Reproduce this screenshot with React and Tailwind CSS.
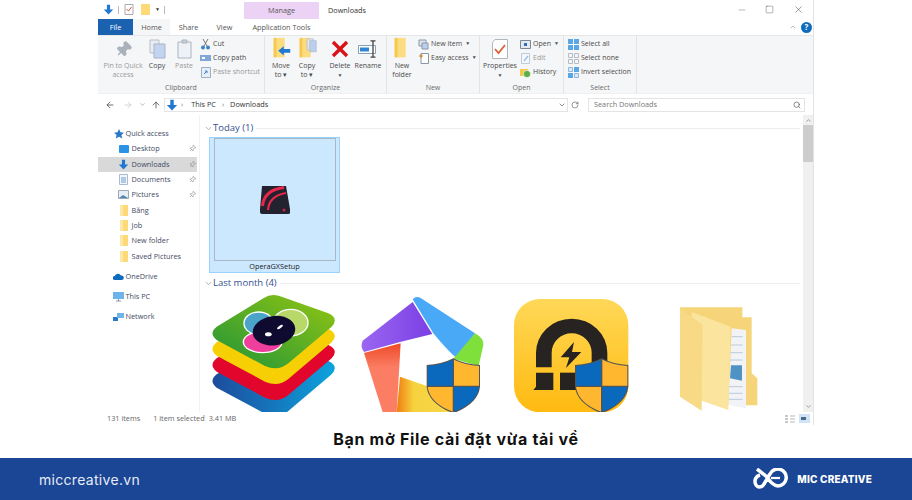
import React from "react";
import {
  ArrowLeft,
  ArrowRight,
  ArrowUp,
  ChevronDown,
  ChevronUp,
  Minus,
  Pin,
  RotateCw,
  Search,
  Square,
  X,
} from "lucide-react";

function DownArrow({ size = 14 }) {
  return (
    <svg width={size} height={size} viewBox="0 0 14 14">
      <path d="M5 1h4v6h4l-6 6.5L1 7h4z" fill="#1f78d1" />
    </svg>
  );
}

function SmallFolder() {
  return (
    <svg width="10" height="13" viewBox="0 0 10 13">
      <path d="M1 1h8v11H1z" fill="#fdd978" />
      <path d="M1 1h3v11H1z" fill="#fbe7a8" />
    </svg>
  );
}

function BigFolder({ children }) {
  return (
    <svg width="22" height="24" viewBox="0 0 22 26">
      <path d="M3 1h12v21H3z" fill="#fcdc7e" />
      <path d="M3 1h3v21H3z" fill="#f5c94f" />
      {children}
    </svg>
  );
}

function RibbonLarge({ icon, label, className, dim }) {
  return (
    <div className={`flex flex-col items-center shrink-0 ${className}`}>
      <div className="h-[24px] flex items-center justify-center">{icon}</div>
      <div
        className={`text-center leading-[9px] whitespace-nowrap ${dim ? "text-[#9a9a9a]" : "text-[#4a4a4a]"}`}
      >
        {label}
      </div>
    </div>
  );
}

function RibbonSmall({ icon, label, dim, caret }) {
  return (
    <div
      className={`h-[14px] flex items-center gap-[2px] whitespace-nowrap ${dim ? "text-[#9a9a9a]" : "text-[#4a4a4a]"}`}
    >
      <span className="w-[11px] h-[11px] flex items-center justify-center shrink-0">{icon}</span>
      <span>{label}</span>
      {caret && <span className="text-[5px] ml-[1px]">▼</span>}
    </div>
  );
}

function RibbonGroup({ title, className, children }) {
  return (
    <div className={`flex flex-col h-full border-r border-[#e2e3e4] shrink-0 ${className}`}>
      <div className="h-[47px] pt-[1px] flex">{children}</div>
      <div className="flex-1 text-center text-[#6a6a6a] leading-[9px]">{title}</div>
    </div>
  );
}

function Shield({ x, y, s = 1 }) {
  return (
    <g transform={`translate(${x} ${y}) scale(${s})`}>
      <path d="M0 20 Q45 18 80 0 Q115 18 160 20 V85 Q155 135 80 165 Q5 135 0 85 Z" fill="#555" />
      <path d="M3 23 Q45 20 78 4 V82 H3 Z" fill="#0a68bd" />
      <path d="M82 4 Q115 20 157 23 V82 H82 Z" fill="#ffb730" />
      <path d="M3 86 H78 V160 Q10 135 3 86 Z" fill="#ffb730" />
      <path d="M82 86 H157 Q150 135 82 160 Z" fill="#0a68bd" />
    </g>
  );
}

function BlueStacksIcon() {
  const layer =
    "M190 55 Q215 38 245 50 L385 100 Q418 115 395 140 L265 250 Q235 275 195 258 L50 180 Q25 160 50 140 Z";
  return (
    <svg width="148" height="118" viewBox="0 42 444 354">
      <defs>
        <linearGradient id="bsGreen" x1="0" x2="1" y1="1" y2="0">
          <stop offset="0" stopColor="#1f9439" />
          <stop offset="1" stopColor="#93c512" />
        </linearGradient>
        <linearGradient id="bsBlue" x1="0" x2="1" y1="0" y2="0">
          <stop offset="0" stopColor="#1d4b9c" />
          <stop offset="1" stopColor="#0da3dd" />
        </linearGradient>
      </defs>
      <path d={layer} transform="translate(0 143)" fill="url(#bsBlue)" />
      <path d={layer} transform="translate(0 95)" fill="#e2062c" />
      <path d={layer} transform="translate(0 47)" fill="#f6cf04" />
      <path d={layer} fill="url(#bsGreen)" />
      {/* white outline of the whole blob, then the fills on top */}
      <ellipse cx="272" cy="128" rx="54" ry="42" fill="#fff" />
      <ellipse cx="176" cy="130" rx="46" ry="36" fill="#fff" />
      <ellipse cx="188" cy="186" rx="60" ry="34" fill="#fff" />
      <ellipse cx="272" cy="128" rx="50" ry="38" fill="#b9d86a" />
      <ellipse cx="176" cy="130" rx="42" ry="32" fill="#4aa3c9" />
      <ellipse cx="188" cy="186" rx="56" ry="30" fill="#ef3f9d" />
      <ellipse cx="222" cy="152" rx="64" ry="44" fill="#0f0a30" transform="rotate(-8 222 152)" />
      <ellipse cx="205" cy="163" rx="10" ry="6" fill="#fff" />
      <ellipse cx="240" cy="141" rx="10" ry="4" fill="#fff" transform="rotate(-35 240 141)" />
    </svg>
  );
}

function MemuIcon() {
  return (
    <svg width="148" height="118" viewBox="444 42 444 354">
      <defs>
        <linearGradient id="memuPurple" x1="0" x2="1" y1="0" y2="0">
          <stop offset="0" stopColor="#9a66f2" />
          <stop offset="1" stopColor="#7b3fe4" />
        </linearGradient>
        <linearGradient id="memuRed" x1="0" x2="0" y1="0" y2="1">
          <stop offset="0" stopColor="#ee4a28" />
          <stop offset="0.35" stopColor="#fb7d63" />
          <stop offset="1" stopColor="#fb7d63" />
        </linearGradient>
        <linearGradient id="memuYellow" x1="0" x2="1" y1="0" y2="0">
          <stop offset="0" stopColor="#f07d10" />
          <stop offset="0.3" stopColor="#f6d23e" />
          <stop offset="1" stopColor="#f6d84a" />
        </linearGradient>
      </defs>
      <path d="M638 58 Q648 46 662 54 L825 160 L772 236 Q745 215 700 160 Z" fill="#4aa9f7" />
      <path d="M638 66 L697 162 L600 186 L492 216 Q480 200 488 182 Z" fill="url(#memuPurple)" />
      <path d="M825 160 Q852 175 850 195 L836 258 L760 236 Z" fill="#7fe03c" />
      <path d="M492 219 L602 190 L590 396 L548 396 Z" fill="url(#memuRed)" />
      <path d="M600 290 L700 325 L760 396 H590 Z" fill="url(#memuYellow)" />
      <Shield x="680" y="235" />
    </svg>
  );
}

function LdIcon() {
  return (
    <svg width="148" height="118" viewBox="-12 42 444 354">
      <defs>
        <linearGradient id="ldBg" x1="0" x2="0" y1="0" y2="1">
          <stop offset="0" stopColor="#ffd857" />
          <stop offset="1" stopColor="#ffba10" />
        </linearGradient>
      </defs>
      <rect x="42" y="57" width="343" height="340" rx="78" fill="url(#ldBg)" />
      <path
        d="M108 262 V218 A107 102 0 0 1 322 218 V262 H275 V218 A60 58 0 0 0 155 218 V262 Z"
        fill="#262320"
      />
      <path d="M108 278 H160 V330 H100 L108 320 Z" fill="#262320" />
      <path d="M180 278 H235 V330 H180 Z" fill="#262320" />
      <path d="M222 186 L182 232 H208 L198 264 L244 216 H216 Z" fill="#262320" />
      <Shield x="225" y="235" />
    </svg>
  );
}

function FolderIcon() {
  return (
    <svg width="148" height="118" viewBox="432 42 444 354">
      <path d="M540 82 H727 V112 H755 V280 L772 295 V376 H700 L540 350 Z" fill="#f6d47a" />
      <path d="M695 145 L738 150 V385 L685 375 Z" fill="#f1f3f6" />
      <path d="M695 170 H728 M693 195 H728 M691 218 H728 M690 240 H728 M686 320 H728 M686 340 H728 M686 358 H728" stroke="#9fb8cc" strokeWidth="2" />
      <path d="M693 256 H726 V302 L690 295 Z" fill="#4f93c4" />
      <path d="M575 96 L692 140 L685 390 L575 352 Z" fill="#fbe59e" />
      <path d="M540 84 L608 135 L605 392 L540 350 Z" fill="#f8d985" />
    </svg>
  );
}

function OperaIcon() {
  return (
    <svg width="30" height="30" viewBox="0 0 30 30">
      <path d="M2 1 H26 L30 24 V28 Q30 29 28 29 H2 Q0 29 0 27 V24 Z" fill="#23222f" />
      <path d="M2.500 21 Q4 5 24 2.500" fill="none" stroke="#e8274b" strokeWidth="3" />
      <path d="M8 25 Q9 11 26 8" fill="none" stroke="#e8274b" strokeWidth="2.200" />
      <circle cx="24" cy="25" r="1.500" fill="#c92244" />
    </svg>
  );
}

function NavRow({ icon, label, pinned, active, sub, className = "" }) {
  return (
    <div
      className={`h-[15.3px] flex items-center shrink-0 ${sub ? "pl-[20px]" : "pl-[15px]"} ${active ? "bg-[#d9d9d9]" : ""} ${className}`}
    >
      <span className="w-[11px] h-[13px] flex items-center justify-center shrink-0">{icon}</span>
      <span className={`text-[#3f4a63] whitespace-nowrap ${sub ? "ml-[2.5px]" : "ml-[1.5px]"}`}>{label}</span>
      {pinned && <Pin size={7} className="ml-auto mr-[1.5px] text-[#8a8a8a] rotate-45" />}
    </div>
  );
}

function GroupHead({ label, className = "" }) {
  return (
    <div className={`flex items-center h-[13px] pl-[4px] ${className}`}>
      <ChevronDown size={9} className="text-[#9a9a9a] shrink-0" />
      <span className="text-[9.5px] text-[#33508f] whitespace-nowrap">{label}</span>
      <div className="flex-1 h-[1px] bg-[#ececf0] ml-[3px]" />
    </div>
  );
}

export default function App() {
  return (
    <div className="w-[912px] h-[500px] bg-white flex flex-col font-['Open_Sans',sans-serif] overflow-hidden">
      {/* explorer window */}
      <div className="ml-[98px] w-[716px] h-[425px] flex flex-col shrink-0 text-[7.3px] border-r border-[#e3e3e3]">
        {/* title bar */}
        <div className="h-[19px] flex items-center shrink-0">
          <div className="w-[146px] flex items-center pl-[5px] shrink-0">
            <DownArrow size={11} />
            <div className="w-[1px] h-[8px] bg-[#bbb] ml-[4px]" />
            <svg width="10" height="11" viewBox="0 0 10 11" className="ml-[5px]">
              <path d="M1 .5h8v10H1z" fill="#fff" stroke="#aaa" />
              <path d="M2.500 5l2 2 3-4" stroke="#d8593c" fill="none" />
            </svg>
            <div className="w-[9px] h-[11px] bg-[#fdd978] ml-[7px]" />
            <div className="text-[5px] ml-[5px] text-[#333]">▼</div>
            <div className="w-[1px] h-[8px] bg-[#bbb] ml-[4px]" />
          </div>
          <div className="w-[75px] h-[17px] mt-[2px] bg-[#ecd2f4] text-[#5a5a5a] flex items-center justify-center shrink-0">
            Manage
          </div>
          <div className="ml-[9px] pt-[2px] text-[#333] whitespace-nowrap">Downloads</div>
          <div className="ml-auto flex items-center text-[#555] pr-[9px]">
            <Minus size={10} strokeWidth={1} />
            <Square size={9} strokeWidth={1} className="ml-[18px] text-[#333]" />
            <X size={11} strokeWidth={1} className="ml-[19px] text-[#333]" />
          </div>
        </div>
        {/* tabs */}
        <div className="h-[16px] flex items-stretch shrink-0 text-[#555]">
          <div className="w-[35px] bg-[#1a62b0] text-white flex items-center justify-center shrink-0">File</div>
          <div className="w-[37px] bg-[#f5f6f7] flex items-center justify-center shrink-0">Home</div>
          <div className="w-[37px] flex items-center justify-center shrink-0">Share</div>
          <div className="w-[35px] flex items-center justify-center shrink-0">View</div>
          <div className="w-[2px] shrink-0" />
          <div className="w-[75px] bg-white flex items-center justify-center shrink-0">Application Tools</div>
          <div className="ml-auto flex items-center pr-[1px] gap-[4px]">
            <ChevronUp size={8} className="text-[#999]" />
            <div className="w-[11px] h-[11px] rounded-full bg-[#0f6cbd] text-white text-[8px] font-bold flex items-center justify-center">?</div>
          </div>
        </div>
        {/* ribbon */}
        <div className="h-[58px] bg-[#f5f6f7] flex shrink-0 border-t border-[#e6e6e6] text-[7px]">
          <RibbonGroup title="Clipboard" className="w-[167px]">
            <RibbonLarge
              dim
              className="w-[40px] ml-[5px]"
              icon={<Pin size={17} fill="#a9b1bb" className="text-[#a9b1bb] rotate-45" />}
              label={<>Pin to Quick<br />access</>}
            />
            <RibbonLarge
              className="w-[28px]"
              icon={
                <svg width="17" height="20" viewBox="0 0 17 20">
                  <path d="M1 1h9v13H1z" fill="#e8ecf1" stroke="#b9c0c9" />
                  <path d="M5 5h11v14H5z" fill="#c3d4f0" stroke="#a8b4c6" />
                </svg>
              }
              label="Copy"
            />
            <RibbonLarge
              dim
              className="w-[26px]"
              icon={
                <svg width="15" height="20" viewBox="0 0 15 20">
                  <path d="M1 3h13v16H1z" fill="#eef2f7" stroke="#a9b4c0" />
                  <path d="M5 1h5v3H5z" fill="#c9d0d8" stroke="#a9b4c0" />
                </svg>
              }
              label="Paste"
            />
            <div className="ml-[3px] flex flex-col">
              <RibbonSmall
                label="Cut"
                icon={
                  <svg width="11" height="11" viewBox="0 0 11 11">
                    <path d="M3 0l4 7M8 0L4 7" stroke="#777" fill="none" />
                    <circle cx="3" cy="8.500" r="2" fill="#3b82c9" />
                    <circle cx="8" cy="8.500" r="2" fill="#3b82c9" />
                  </svg>
                }
              />
              <RibbonSmall
                label="Copy path"
                icon={
                  <svg width="11" height="8" viewBox="0 0 11 8">
                    <path d="M0 1h11v6H0z" fill="#7fa8d8" />
                    <path d="M2 3h3v2H2z" fill="#fff" />
                  </svg>
                }
              />
              <RibbonSmall
                dim
                label="Paste shortcut"
                icon={
                  <svg width="10" height="11" viewBox="0 0 10 11">
                    <path d="M.5.5h9v10h-9z" fill="#e8eef6" stroke="#9fb0c4" />
                    <path d="M3 7l3-3M4 4h2v2" stroke="#3b82c9" fill="none" />
                  </svg>
                }
              />
            </div>
          </RibbonGroup>
          <RibbonGroup title="Organize" className="w-[122px]">
            <RibbonLarge
              className="w-[26px] ml-[3px]"
              icon={
                <BigFolder>
                  <path d="M8 15l6-5v3h7v4h-7v3z" fill="#1f78d1" />
                </BigFolder>
              }
              label={<>Move<br />to ▾</>}
            />
            <RibbonLarge
              className="w-[26px]"
              icon={
                <BigFolder>
                  <path d="M11 2h7v12h-7z" fill="#dfe6f0" stroke="#aab4c2" strokeWidth=".7" />
                  <path d="M14 4h7v12h-7z" fill="#bcd0ee" stroke="#aab4c2" strokeWidth=".7" />
                </BigFolder>
              }
              label={<>Copy<br />to ▾</>}
            />
            <RibbonLarge
              className="w-[28px] ml-[6px]"
              icon={
                <svg width="18" height="18" viewBox="0 0 18 18">
                  <path d="M2 2l14 14M16 2L2 16" stroke="#d8141a" strokeWidth="3.400" />
                </svg>
              }
              label={<>Delete<br /><span className="text-[5px]">▼</span></>}
            />
            <RibbonLarge
              className="w-[28px]"
              icon={
                <svg width="20" height="18" viewBox="0 0 20 18">
                  <path d="M.5 5.500h17v8H.5z" fill="#fff" stroke="#8aa0b8" />
                  <path d="M2 7.500h9v4H2z" fill="#2f86d6" />
                  <path d="M15 1v16M12.500 .8h5M12.500 17.200h5" stroke="#444" strokeWidth="1.300" fill="none" />
                </svg>
              }
              label="Rename"
            />
          </RibbonGroup>
          <RibbonGroup title="New" className="w-[93px]">
            <RibbonLarge
              className="w-[24px] ml-[3px]"
              icon={<BigFolder />}
              label={<>New<br />folder</>}
            />
            <div className="ml-[4px] flex flex-col">
              <RibbonSmall
                caret
                label="New item"
                icon={
                  <svg width="11" height="11" viewBox="0 0 11 11">
                    <path d="M1 1h7v6H1z" fill="#dfe6f0" stroke="#8a97a8" />
                    <path d="M4 4h6v6H4z" fill="#bcd0ee" stroke="#8a97a8" />
                  </svg>
                }
              />
              <RibbonSmall
                caret
                label="Easy access"
                icon={
                  <svg width="10" height="11" viewBox="0 0 10 11">
                    <path d="M2 .5h7.500v10H2z" fill="#fff" stroke="#8a97a8" />
                    <path d="M0 3h4M2 1v4" stroke="#c9861f" />
                  </svg>
                }
              />
            </div>
          </RibbonGroup>
          <RibbonGroup title="Open" className="w-[84px]">
            <RibbonLarge
              className="w-[40px]"
              icon={
                <svg width="16" height="20" viewBox="0 0 16 20">
                  <path d="M.5 3.500L3 .5h12.500v19H.5z" fill="#fff" stroke="#b0b6bd" />
                  <path d="M3 10l3.500 4L13 6" stroke="#e0603a" strokeWidth="1.800" fill="none" />
                </svg>
              }
              label={<>Properties<br /><span className="text-[5px]">▼</span></>}
            />
            <div className="flex flex-col">
              <RibbonSmall
                caret
                label="Open"
                icon={
                  <svg width="11" height="9" viewBox="0 0 11 9">
                    <path d="M.5.5h10v8H.5z" fill="#e4e9ef" stroke="#7d8896" />
                    <path d="M4 3h3v3H4z" fill="#2f6fb8" />
                  </svg>
                }
              />
              <RibbonSmall
                dim
                label="Edit"
                icon={
                  <svg width="9" height="11" viewBox="0 0 9 11">
                    <path d="M.5.5h8v10h-8z" fill="#f5f8fc" stroke="#bfcbd9" />
                    <path d="M3 8l4-5" stroke="#9fc0e4" strokeWidth="1.500" />
                  </svg>
                }
              />
              <RibbonSmall
                label="History"
                icon={
                  <svg width="11" height="11" viewBox="0 0 11 11">
                    <path d="M0 2h8v7H0z" fill="#f2c94c" />
                    <circle cx="7" cy="7" r="3.600" fill="#5cae4a" stroke="#fff" strokeWidth=".6" />
                  </svg>
                }
              />
            </div>
          </RibbonGroup>
          <RibbonGroup title="Select" className="w-[73px]">
            <div className="ml-[4px] flex flex-col">
              <RibbonSmall
                label="Select all"
                icon={
                  <svg width="11" height="11" viewBox="0 0 11 11">
                    <path d="M0 0h11v11H0z" fill="#5aa7e8" />
                    <path d="M5.500 0v11M0 5.500h11" stroke="#fff" />
                  </svg>
                }
              />
              <RibbonSmall
                label="Select none"
                icon={
                  <svg width="11" height="11" viewBox="0 0 11 11">
                    <path d="M.5.5h4v4h-4zM6.500.5h4v4h-4zM.5 6.500h4v4h-4zM6.500 6.500h4v4h-4z" fill="none" stroke="#b5bcc5" />
                  </svg>
                }
              />
              <RibbonSmall
                label="Invert selection"
                icon={
                  <svg width="11" height="11" viewBox="0 0 11 11">
                    <path d="M6 0h5v5H6zM0 6h5v5H0z" fill="#5aa7e8" />
                    <path d="M.5.5h4v4h-4zM6.500 6.500h4v4h-4z" fill="#dbe9f7" stroke="#8fb6dc" />
                  </svg>
                }
              />
            </div>
          </RibbonGroup>
        </div>
        {/* address bar */}
        <div className="h-[22px] flex items-center shrink-0 border-t border-[#f0f0f0] text-[#555]">
          <ArrowLeft size={10} className="ml-[7px] text-[#555] shrink-0" />
          <ArrowRight size={10} className="ml-[8px] text-[#ccc] shrink-0" />
          <ChevronDown size={7} className="ml-[6px] text-[#888] shrink-0" />
          <ArrowUp size={10} className="ml-[5px] text-[#555] shrink-0" />
          <div className="ml-[3px] w-[404px] h-[14px] border border-[#e4e4e4] flex items-center pl-[1px] shrink-0">
            <DownArrow size={12} />
            <span className="ml-[3px] text-[#777]">›</span>
            <span className="ml-[8px] text-[#333]">This PC</span>
            <span className="ml-[6px] text-[#777]">›</span>
            <span className="ml-[6px] text-[#333]">Downloads</span>
            <ChevronDown size={8} className="ml-auto mr-[1px] text-[#555]" />
          </div>
          <RotateCw size={8} className="ml-[3px] text-[#666] shrink-0" />
          <div className="ml-[9px] w-[217px] h-[14px] border border-[#e4e4e4] flex items-center pl-[5px] pr-[3px] shrink-0 text-[#777]">
            <span>Search Downloads</span>
            <Search size={8} className="ml-auto text-[#555]" />
          </div>
        </div>
        {/* main */}
        <div className="flex-1 min-h-0 flex">
          {/* nav pane */}
          <div className="w-[99px] shrink-0 flex flex-col pt-[11px] mr-[2px]">
            <NavRow
              label="Quick access"
              icon={
                <svg width="10" height="10" viewBox="0 0 10 10">
                  <path d="M5 0l1.500 3.300 3.500.4-2.600 2.300.8 3.500L5 7.700 1.800 9.500l.8-3.500L0 3.700l3.500-.4z" fill="#2a78c8" />
                </svg>
              }
            />
            <NavRow
              sub
              pinned
              label="Desktop"
              icon={<div className="w-[10px] h-[8px] bg-[#2a93e6] rounded-[1px]" />}
            />
            <NavRow sub pinned active label="Downloads" icon={<DownArrow size={11} />} />
            <NavRow
              sub
              pinned
              label="Documents"
              icon={
                <svg width="9" height="11" viewBox="0 0 9 11">
                  <path d="M.5.5h8v10h-8z" fill="#f3f7fc" stroke="#a9bcd2" />
                  <path d="M2 4h5M2 6h5M2 8h5" stroke="#6d9ed1" />
                </svg>
              }
            />
            <NavRow
              sub
              pinned
              label="Pictures"
              icon={
                <svg width="11" height="9" viewBox="0 0 11 9">
                  <path d="M.5.5h10v8H.5z" fill="#e7eef6" stroke="#9aa8b8" />
                  <path d="M1 8l4-3 5 3z" fill="#4e87b8" />
                </svg>
              }
            />
            <NavRow sub label="Bằng" icon={<SmallFolder />} />
            <NavRow sub label="Job" icon={<SmallFolder />} />
            <NavRow sub label="New folder" icon={<SmallFolder />} />
            <NavRow sub label="Saved Pictures" icon={<SmallFolder />} />
            <NavRow
              className="mt-[5px]"
              label="OneDrive"
              icon={
                <svg width="11" height="7" viewBox="0 0 11 7">
                  <path d="M2 7a2 2 0 0 1-.3-4A3.500 3.500 0 0 1 8 2.500 2.300 2.300 0 0 1 9 7z" fill="#0f6cbd" />
                </svg>
              }
            />
            <NavRow
              className="mt-[5px]"
              label="This PC"
              icon={
                <svg width="11" height="11" viewBox="0 0 11 11">
                  <path d="M0 1h11v7H0z" fill="#6db4ea" />
                  <path d="M3 10h5M5.500 8v2" stroke="#8a97a8" />
                </svg>
              }
            />
            <NavRow
              className="mt-[5px]"
              label="Network"
              icon={
                <svg width="11" height="10" viewBox="0 0 11 10">
                  <path d="M0 5h5v4H0z" fill="#2a78c8" />
                  <path d="M4 1h7v5H4z" fill="#6db4ea" />
                </svg>
              }
            />
          </div>
          {/* file list */}
          <div className="flex-1 min-w-0 flex border-l border-[#f2f2f2] overflow-hidden">
            <div className="flex-1 min-w-0 flex flex-col pt-[7px]">
              <GroupHead label="Today (1)" />
              <div className="ml-[9px] mt-[2px] w-[131px] h-[136px] bg-[#cce8ff] border border-[#99d1ff] flex flex-col items-center shrink-0">
                <div className="w-[122px] h-[123px] border border-[#a9b8c6] flex items-center justify-center shrink-0">
                  <OperaIcon />
                </div>
                <div className="flex-1 flex items-center text-[#222]">OperaGXSetup</div>
              </div>
              <GroupHead label="Last month (4)" className="mt-[4px]" />
              <div className="flex mt-[4px] overflow-hidden">
                <div className="w-[148px] shrink-0"><BlueStacksIcon /></div>
                <div className="w-[148px] shrink-0"><MemuIcon /></div>
                <div className="w-[148px] shrink-0"><LdIcon /></div>
                <div className="w-[148px] shrink-0"><FolderIcon /></div>
              </div>
            </div>
            {/* scrollbar */}
            <div className="w-[10px] ml-[3px] bg-[#f0f0f0] flex flex-col items-center shrink-0">
              <ChevronUp size={7} className="mt-[2px] text-[#666]" />
              <div className="w-full h-[37px] mt-[1px] bg-[#cdcdcd]" />
              <ChevronDown size={7} className="mt-auto mb-[2px] text-[#666]" />
            </div>
          </div>
        </div>
        {/* status bar */}
        <div className="h-[13px] flex items-center shrink-0 text-[#666] pl-[9px] pr-[3px]">
          <span>131 items</span>
          <span className="ml-[13px]">1 item selected</span>
          <span className="ml-[4px]">3.41 MB</span>
          <svg width="11" height="9" viewBox="0 0 11 9" className="ml-auto">
            <path d="M0 1h3v2H0zM0 4h3v2H0zM0 7h3v2H0z" fill="#c9c9c9" />
            <path d="M5 2h5M5 5h5M5 8h5" stroke="#bbb" />
          </svg>
          <svg width="11" height="9" viewBox="0 0 11 9" className="ml-[3px]">
            <path d="M0 0h11v9H0z" fill="#cfe4f6" />
            <path d="M2 3h5v3H2z" fill="#4c6a88" />
          </svg>
        </div>
      </div>
      {/* caption */}
      <div className="h-[33px] pb-[5px] shrink-0 flex items-center justify-center font-['Inter',sans-serif] font-bold text-[16px] tracking-[0.7px] text-[#111]">
        Bạn mở File cài đặt vừa tải về
      </div>
      {/* footer */}
      <div className="flex-1 bg-[#1b4595] flex items-center pl-[39px] pr-[40px] text-white">
        <span className="font-['Inter',sans-serif] text-[14px] tracking-[0.3px] text-[#e6ecf6]">miccreative.vn</span>
        <svg width="36" height="22" viewBox="0 0 36 22" className="ml-auto" fill="none" stroke="#fff" strokeWidth="3.500">
          <path d="M4 1 L13 8 C16 11 18 17 25 18 A8.500 8.500 0 1 0 17 6 L11 16 C9 20 4 20 2.500 16 C1 12 3 8 7 7" />
          <path d="M18 10 H27" strokeWidth="2.200" />
        </svg>
        <span className="ml-[8px] font-['Inter',sans-serif] font-extrabold text-[10px] tracking-[0.2px]">MIC CREATIVE</span>
      </div>
    </div>
  );
}
